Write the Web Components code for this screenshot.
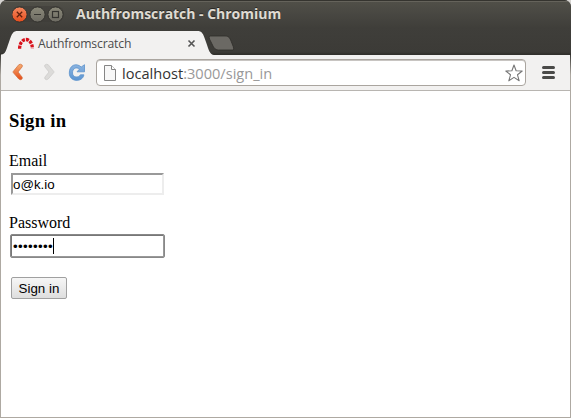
<!DOCTYPE html>
<html lang="en">
<head>
<meta charset="utf-8">
<title>Authfromscratch</title>
<style>
html,body{margin:0;height:100%;overflow:hidden;background:#d5d3d0}
</style>
</head>
<body>
<browser-window>
  <title-bar slot="chrome">Authfromscratch - Chromium</title-bar>
  <tab-strip slot="chrome">Authfromscratch</tab-strip>
  <nav-bar slot="chrome"><span slot="host">localhost</span><span slot="path">:3000/sign_in</span></nav-bar>
  <sign-in-form></sign-in-form>
</browser-window>
<script>
function define(name, html) {
  const t = document.createElement('template');
  t.innerHTML = html;
  customElements.define(name, class extends HTMLElement {
    constructor() {
      super();
      this.attachShadow({mode: 'open'}).append(t.content.cloneNode(true));
    }
  });
}

define('browser-window', `
<style>
:host{display:flex;flex-direction:column;box-sizing:border-box;width:571px;height:418px;border-radius:7px 7px 0 0;overflow:hidden;
 background:linear-gradient(#3c3b37 55px,#aea9a2 75px)}
main{flex:1;margin:0 1px 1px;background:#fff}
</style>
<slot name="chrome"></slot><main><slot></slot></main>`);

define('title-bar', `
<style>
:host{display:flex;align-items:center;height:28px;box-sizing:border-box;padding-left:12px;
 background:linear-gradient(#35342f 0 1px,#65635b 1px 2px,#504f48 2px,#3f3e3a 28px);
 font:bold 14px "Open Sans","Noto Sans",sans-serif;color:#dfdbd2}
svg{flex:none}
span{margin-left:12px;margin-top:-1px;white-space:nowrap;letter-spacing:-.02px;text-shadow:0 -1px #292824}
</style>
<svg width="52" height="18" viewBox="0 0 52 18">
 <defs>
  <linearGradient id="r" x2="0" y2="1"><stop stop-color="#f58a61"/><stop offset="1" stop-color="#e64c1c"/></linearGradient>
  <linearGradient id="g" x2="0" y2="1"><stop stop-color="#92907f" stop-opacity=".9"/><stop offset="1" stop-color="#6c6a62"/></linearGradient>
 </defs>
 <rect x="0" y="1" width="52" height="16" rx="8" fill="#3b3a36" opacity=".45"/>
 <g stroke="#34332f" stroke-width="1">
  <circle cx="7.5" cy="9.5" r="7.6" fill="url(#r)"/><circle cx="25.5" cy="9.5" r="7.6" fill="url(#g)"/><circle cx="43.5" cy="9.5" r="7.6" fill="url(#g)"/>
 </g>
 <path d="M4.8 6.8l5.4 5.4m0-5.4l-5.4 5.4" stroke="#60200d" stroke-width="1.3"/>
 <path d="M22 9.5h7" stroke="#34332f" stroke-width="1.2"/>
 <rect x="40.5" y="6.5" width="6" height="6" fill="none" stroke="#34332f" stroke-width="1.2"/>
</svg><span><slot></slot></span>`);

define('tab-strip', `
<style>
:host{display:grid;height:27px;background:linear-gradient(#3f3e3a,#3c3b37 24px,#31302c 26px);
 font:12.2px "Open Sans","Noto Sans",sans-serif;color:#4c4c4c}
svg,.row{grid-area:1/1}
.row{display:flex;align-items:center;height:25px;margin-top:3px;padding-left:38px;width:158px;justify-content:space-between;line-height:25px}
.row b{font-weight:normal;white-space:nowrap;letter-spacing:-.17px}
</style>
<svg width="571" height="27" viewBox="0 28 571 27">
 <path d="M1 55V54.5C6 54 6 50 9 42C12 33 13 31 18 31H197C202 31 203 33 206 42C209 51 210 54.5 214 55Z" fill="#f2f1f0"/>
 <path d="M210.5 36H225C229 36 230 38 232 43.5Q235 50 232.5 50H218.5C214.5 50 213.5 47 211 42Q207.5 36 210.5 36Z" fill="#6b6964" stroke="#2e2d29" stroke-width=".8"/>
 <path d="M19.6 48.8C19.8 36.4 32.2 36.4 32.4 48.8" fill="none" stroke="#d8121b" stroke-width="3.3" stroke-dasharray="3.1 1"/>
</svg>
<div class="row"><b><slot></slot></b><svg width="9" height="9" viewBox="0 0 9 9"><path d="M1.5 1.5l6 6m0-6l-6 6" stroke="#555" stroke-width="1.6"/></svg></div>`);

define('nav-bar', `
<style>
:host{display:flex;align-items:center;height:36px;box-sizing:border-box;margin:0 1px;padding:0 14px 0 11px;background:#f2f1f0;border-bottom:1px solid #b8b5b1;
 font:14.6px "Open Sans","Noto Sans",sans-serif;color:#333}
svg{flex:none}
.box{display:flex;align-items:center;box-sizing:border-box;width:430px;height:27px;margin:0 16px 0 10px;padding:0 2px 0 7px;border:1px solid #aaa59f;border-radius:4px;background:#fff;box-shadow:inset 0 1px #c8c5c2}
.box span{flex:1;margin-left:6px;white-space:nowrap;letter-spacing:0}
i{font-style:normal;color:#999}
</style>
<svg width="74" height="24" viewBox="12 61 74 24">
 <defs>
 <linearGradient id="o" x2="0" y2="1"><stop stop-color="#f6ae72"/><stop offset="1" stop-color="#e64b18"/></linearGradient>
 <linearGradient id="b" x2="0" y2="1"><stop stop-color="#8cb4e0"/><stop offset="1" stop-color="#5b95d2"/></linearGradient>
 </defs>
 <path d="M18.8 64.7Q20.7 63.5 22.3 65.2L22.2 66.8L18 72L22.2 77.2Q22.8 79.4 20.4 79.7L18.8 79L13.2 72.5V71.5Z" fill="url(#o)" stroke="#d06a38" stroke-width=".7"/>
 <path d="M48.2 64.7Q46.3 63.5 44.7 65.2L44.8 66.8L49 72L44.8 77.2Q44.2 79.4 46.6 79.7L48.2 79L53.8 72.5V71.5Z" fill="#dcdbd9" stroke="#cac9c7" stroke-width=".7"/>
 <path d="M81.2 67L84.5 64.7V71.8H77L79.6 69C76 66.4 72.4 68.8 72.5 73C72.6 77.7 78.7 78.2 80.4 74.8H83.9C82.6 82.6 69.6 82.4 69.3 73.2C69.1 65 76.4 62.4 81.2 67Z" fill="url(#b)" stroke="#5c92cc" stroke-width=".8"/>
</svg>
<div class="box">
 <svg width="12" height="16" viewBox="0 0 12 16"><path d="M.5.5H7.5L11.5 4.5V15.5H.5Z" fill="#f7f7f7" stroke="#858585"/><path d="M7.5.5V4.5H11.5" fill="#fff" stroke="#858585"/></svg>
 <span><slot name="host"></slot><i><slot name="path"></slot></i></span>
 <svg width="18" height="18" viewBox="0 0 18 18"><path d="M9 1L11.1 6.8L17.2 7L12.5 10.8L14.2 16.8L9 13.4L3.8 16.8L5.5 10.8L.8 7L6.9 6.8Z" fill="#fff" stroke="#777" stroke-width="1.1" stroke-linejoin="round"/></svg>
</div>
<svg width="13" height="13" viewBox="0 0 13 13"><path d="M1.5 1.5h10m-10 5h10m-10 5h10" stroke="#4a4a48" stroke-width="3" stroke-linecap="round"/></svg>`);

define('sign-in-form', `
<style>
:host{display:block;padding:19px 8px 0;font:16px/18px "Liberation Serif",serif;color:#000}
h3{margin:0 0 20px;font-size:18.7px;line-height:22px;font-weight:bold;letter-spacing:.25px}
form-field{margin-bottom:19px}
button{display:block;box-sizing:border-box;width:56px;height:22px;margin:20px 2px 0;padding:0;border:1px solid #a0a0a0;border-radius:2px;background:linear-gradient(#f6f6f6,#dedede);font:13.33px "Liberation Sans",sans-serif;color:#000}
</style>
<h3>Sign in</h3>
<form-field><span slot="label">Email</span>o@k.io</form-field>
<form-field class="focus"><span slot="label">Password</span>••••••••</form-field>
<button>Sign in</button>`);

define('form-field', `
<style>
:host{display:block}
.in{display:flex;align-items:center;box-sizing:border-box;width:153px;height:22px;margin:3px 2px 0;border:2px solid;border-color:#999 #ededed #ededed #999;background:#fff;font:13.33px "Liberation Sans",sans-serif}
:host(.focus) .in{border-width:1px;padding:1px;border-color:#777 #999 #999 #777;outline:1px solid #888;border-radius:1px}
:host(.focus) .t{letter-spacing:.33px}
.caret{display:none;width:1px;height:16px;background:#000}
:host(.focus) .caret{display:block}
</style>
<slot name="label"></slot>
<div class="in"><span class="t"><slot></slot></span><span class="caret"></span></div>`);
</script>
</body>
</html>
